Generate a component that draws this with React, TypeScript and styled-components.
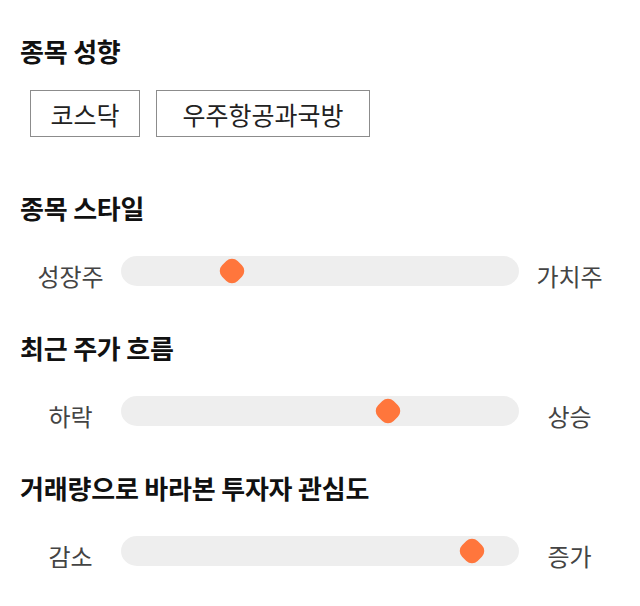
import styled, { createGlobalStyle } from "styled-components"

const GlobalStyle = createGlobalStyle`
  body {
    margin: 0;
    background: #ffffff;
    font-family: "Noto Sans CJK KR", "Noto Sans", sans-serif;
    color: #111111;
  }
`

const Page = styled.div`
  padding: 33px 20px 0;
  display: flex;
  flex-direction: column;
`

const Section = styled.section<{ $gap: number; $after: number }>`
  display: flex;
  flex-direction: column;
  gap: ${({ $gap }) => $gap}px;
  margin-bottom: ${({ $after }) => $after}px;
`

const Title = styled.h2`
  margin: 0;
  font-size: 26px;
  font-weight: 700;
  line-height: 36px;
  letter-spacing: -0.2px;
`

const Chips = styled.div`
  display: flex;
  gap: 16px;
  padding-left: 10px;
`

const Chip = styled.div<{ $pad: number }>`
  height: 47px;
  box-sizing: border-box;
  display: flex;
  align-items: center;
  padding: 0 ${({ $pad }) => $pad}px;
  border: 1px solid #8c8c8c;
  font-size: 25px;
  color: #222222;
`

const SliderRow = styled.div`
  display: grid;
  grid-template-columns: 101px 398px 101px;
  align-items: start;
`

const Label = styled.span`
  font-size: 24px;
  line-height: 40px;
  color: #444444;
  text-align: center;
`

const Track = styled.div`
  position: relative;
  height: 30px;
  border-radius: 16px / 15px;
  background: #eeeeee;
`

const Thumb = styled.div`
  position: absolute;
  top: 50%;
  width: 22px;
  height: 22px;
  margin: -11px 0 0 -11px;
  border-radius: 8px;
  background: #ff763c;
  transform: rotate(45deg);
`

type Slide = { title: string; left: string; right: string; pos: number }

const slides: Slide[] = [
  { title: "종목 스타일", left: "성장주", right: "가치주", pos: 111 },
  { title: "최근 주가 흐름", left: "하락", right: "상승", pos: 267 },
  { title: "거래량으로 바라본 투자자 관심도", left: "감소", right: "증가", pos: 351 },
]

export default function App() {
  return (
    <>
      <GlobalStyle />
      <Page>
        <Section $gap={21} $after={53}>
          <Title>종목 성향</Title>
          <Chips>
            <Chip $pad={19.5}>코스닥</Chip>
            <Chip $pad={25.5}>우주항공과국방</Chip>
          </Chips>
        </Section>
        {slides.map((s) => (
          <Section key={s.title} $gap={30} $after={34}>
            <Title>{s.title}</Title>
            <SliderRow>
              <Label>{s.left}</Label>
              <Track>
                <Thumb style={{ left: s.pos }} />
              </Track>
              <Label>{s.right}</Label>
            </SliderRow>
          </Section>
        ))}
      </Page>
    </>
  )
}
